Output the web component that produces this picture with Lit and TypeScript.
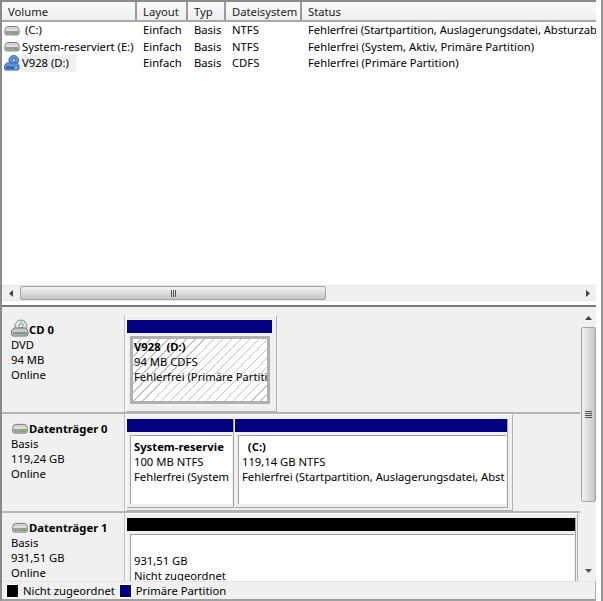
import { LitElement, html, css, svg } from "lit";
import { customElement } from "lit/decorators.js";

const driveIcon = (w = 16) => html`<svg class="ico" width=${w} height="11" viewBox="0 0 18 12">
  <path d="M4 1.5 H14 Q15.5 1.5 16.5 4 L17 6 V9 Q17 11 15 11 H3 Q1 11 1 9 V6 L1.5 4 Q2.5 1.5 4 1.5 Z" fill="#cfd1cf" stroke="#6f7270"/>
  <path d="M2 5.5 H16" stroke="#f4f4f4"/>
  <rect x="2" y="6.5" width="14" height="3.5" fill="#9a9e9c"/>
  <rect x="12" y="7" width="3" height="2.5" fill="#46c43c"/>
</svg>`;

const dvdIcon = svg`
  <circle cx="10" cy="7" r="6" fill="#dfe6e4" stroke="#8d9392"/>
  <circle cx="10" cy="7" r="2" fill="#fff" stroke="#7f8a88"/>
  <path d="M10 1 V5 M14 3 L11.5 6" stroke="#8fb88f"/>`;

const cdIcon = html`<svg class="ico cd" width="18" height="18" viewBox="0 0 18 18">
  ${dvdIcon}
  <path d="M3 9 H15 L17 12 V15 Q17 17 15 17 H2 Q0.5 17 0.5 15 V12 Z" fill="#c9cbc9" stroke="#6f7270"/>
  <rect x="2" y="13" width="14" height="2.5" fill="#8d918f"/>
  <rect x="11" y="13.3" width="3" height="2" fill="#46c43c"/>
</svg>`;

const blueCd = html`<svg class="ico" width="16" height="16" viewBox="0 0 18 18">
  <circle cx="11" cy="6" r="5.5" fill="#5f93d6" stroke="#2f62ad"/>
  <circle cx="11" cy="6" r="1.8" fill="#d8e8fa" stroke="#2f62ad"/>
  <path d="M3 9 H15 L17 12 V15 Q17 17 15 17 H2 Q0.5 17 0.5 15 V12 Z" fill="#5f93d6" stroke="#2f62ad"/>
  <rect x="2" y="13" width="14" height="2.5" fill="#2f62ad"/>
  <rect x="12" y="13.3" width="3" height="2" fill="#9fd0ff"/>
</svg>`;

const COLS = [
  { label: "Volume", w: 135 },
  { label: "Layout", w: 51 },
  { label: "Typ", w: 38 },
  { label: "Dateisystem", w: 76 },
  { label: "Status", w: 294 },
];

const ROWS = [
  { icon: driveIcon(), name: "\u00a0(C:)", cells: ["Einfach", "Basis", "NTFS", "Fehlerfrei (Startpartition, Auslagerungsdatei, Absturzab"] },
  { icon: driveIcon(), name: "System-reserviert (E:)", cells: ["Einfach", "Basis", "NTFS", "Fehlerfrei (System, Aktiv, Primäre Partition)"] },
  { icon: blueCd, name: "V928 (D:)", sel: true, cells: ["Einfach", "Basis", "CDFS", "Fehlerfrei (Primäre Partition)"] },
];

@customElement("app-root")
export class AppRoot extends LitElement {
  static styles = css`
    :host {
      display: block;
      width: 603px;
      height: 601px;
      box-sizing: border-box;
      background: #fff;
      font: 11.25px/15px "Noto Sans", sans-serif;
      color: #000;
      overflow: hidden;
      border-right: 2px solid #8f8f8f;
    }
    .wrap { width: 596px; box-sizing: border-box; border-left: 2px solid #8a8a8a; border-top: 2px solid #8a8a8a; border-bottom: 2px solid #a0a0a0; display: flex; flex-direction: column; height: 100%; }
    .list { height: 303px; flex: none; display: flex; flex-direction: column; background: #fff; }
    .head { display: flex; height: 20px; box-sizing: border-box; flex: none; background: linear-gradient(#fbfbfb, #eceeef); border-bottom: 2px solid #a8a8a8; }
    .th { box-sizing: border-box; padding-left: 6px; border-right: 2px solid #9a9a9a; line-height: 20px; color: #222; flex: none; }
    .th:last-child { border-right: none; }
    .body { flex: 1; }
    .tr { display: flex; height: 16.5px; line-height: 16.5px; white-space: nowrap; }
    .td { box-sizing: border-box; padding-left: 6px; flex: none; overflow: hidden; }
    .tr:first-child .td:last-child { letter-spacing: -0.07px; }
    .td.first { padding-left: 2px; display: flex; align-items: center; }
    .nm { display: inline-block; padding: 0 7px 0 2px; }
    .sel .nm { background: #f0f0f0; }
    .ico { flex: none; display: block; }
    .hs { height: 16px; box-sizing: border-box; flex: none; background: #f0f0f0; display: flex; align-items: center; border-top: 1px solid #e6e6e6; border-bottom: 1px solid #e6e6e6; }
    .arrow { width: 18px; flex: none; display: flex; justify-content: center; }
    .hthumb { width: 306px; height: 14px; box-sizing: border-box; border: 1px solid #a4a4a4; border-radius: 2px; background: linear-gradient(#f2f2f2, #dcdcdc 50%, #c4c4c4); display: flex; align-items: center; justify-content: center; }
    .grip { display: flex; gap: 1px; }
    .grip i { width: 1px; height: 7px; background: #555; display: block; }
    .gap { height: 4px; flex: none; background: #fff; }
    .split { height: 2px; flex: none; background: #7a7a7a; }
    .lower { flex: 1; min-height: 0; display: flex; background: #f0f0f0; overflow: hidden; }
    .disks { flex: 1; min-width: 0; padding-top: 8px; overflow: hidden; }
    .disk { display: flex; height: 97px; }
    .disk.sep { border-top: 2px solid #b4b4b4; box-sizing: content-box; }
    .info { width: 123px; flex: none; box-sizing: border-box; padding: 7px 0 0 9px; border-right: 1px solid #c4c4c4; white-space: nowrap; }
    .ttl { display: flex; font-weight: 700; align-items: center; height: 15px; }
    .ttl .cd { margin-top: -4px; }
    .map { flex: none; box-sizing: border-box; margin-left: 1px; padding: 4px 4px 0 0; background: #f0f0f0; border: 1px solid; border-color: #fff #b0b0b0 #b0b0b0 #fff; display: flex; gap: 1px; height: 97px; }
    .part { display: flex; flex-direction: column; flex: none; overflow: hidden; box-sizing: border-box; border-right: 1px solid #a4a4a4; border-bottom: 1px solid #a4a4a4; }
    .part.plain { border: none; }
    .band { height: 13px; flex: none; margin-bottom: 2px; background: #000080; }
    .band.black { background: #000; }
    .pbody { flex: 1; box-sizing: border-box; margin: 1px 1px 3px 3px; border-top: 1px solid #a0a0a0; border-left: 1px solid #a0a0a0; background: #fff; padding: 3px 0 0 3px; white-space: nowrap; overflow: hidden; }
    .pbody.hatch { border: 3px solid #b0b0b0; padding: 0 0 0 1px; background: repeating-linear-gradient(135deg, #fff 0 5.4px, #c4c4c4 5.4px 6.4px); margin: 1px 2px 3px 3px; }
    .pbody b { display: block; height: 15px; }
    .vs { width: 16px; flex: none; display: flex; flex-direction: column; align-items: center; }
    .up { height: 20px; flex: none; display: flex; align-items: center; justify-content: center; padding-top: 2px; box-sizing: border-box; }
    .vthumb { width: 15px; height: 175px; box-sizing: border-box; border: 1px solid #a4a4a4; border-radius: 2px; background: linear-gradient(90deg, #f2f2f2, #dcdcdc 50%, #c4c4c4); display: flex; align-items: center; justify-content: center; flex: none; }
    .vgrip { display: flex; flex-direction: column; gap: 1px; }
    .vgrip i { width: 7px; height: 1px; background: #555; display: block; }
    .down { margin-top: auto; margin-bottom: 2px; height: 16px; display: flex; align-items: center; justify-content: center; }
    .legend { height: 18px; flex: none; background: #f0f0f0; display: flex; align-items: center; padding-left: 4px; border-top: 1px solid #e4e4e4; border-right: 1px solid #b0b0b0; box-sizing: border-box; }
    .sw { width: 11px; height: 12px; border: 1px solid #fff; flex: none; margin-right: 4px; }
    .sw.k { background: #000; }
    .sw.n { background: #000080; }
    .lg { margin-right: 4px; white-space: nowrap; }
    .tri { display: block; }
  `;

  private part(width: number, height: number, band: string, lines: unknown[], hatch = false) {
    return html`<div class="part ${hatch ? "plain" : ""}" style="width:${width}px;height:${height}px">
      <div class="band ${band}"></div>
      <div class="pbody ${hatch ? "hatch" : ""}">${lines}</div>
    </div>`;
  }

  render() {
    return html`<div class="wrap">
      <div class="list">
        <div class="head">
          ${COLS.map((c) => html`<div class="th" style="width:${c.w}px">${c.label}</div>`)}
        </div>
        <div class="body">
          ${ROWS.map((r) => html`<div class="tr ${r.sel ? "sel" : ""}">
            <div class="td first" style="width:${COLS[0].w}px">${r.icon}<span class="nm">${r.name}</span></div>
            ${r.cells.map((t, i) => html`<div class="td" style="width:${COLS[i + 1].w}px">${t}</div>`)}
          </div>`)}
        </div>
        <div class="hs">
          <div class="arrow"><svg class="tri" width="5" height="7"><path d="M4 0 V7 L0 3.5 Z" fill="#444"/></svg></div>
          <div class="hthumb"><span class="grip"><i></i><i></i><i></i></span></div>
          <div style="flex:1"></div>
          <div class="arrow"><svg class="tri" width="5" height="7"><path d="M1 0 V7 L5 3.5 Z" fill="#444"/></svg></div>
        </div>
        <div class="gap"></div>
      </div>
      <div class="split"></div>
      <div class="lower">
        <div class="disks">
          <div class="disk">
            <div class="info">
              <div class="ttl">${cdIcon}<span>CD 0</span></div>
              <div>DVD</div><div>94 MB</div><div>Online</div>
            </div>
            <div class="map" style="width:151px">
              ${this.part(145, 87, "", [html`<b>V928&nbsp; (D:)</b>`, html`<div>94 MB CDFS</div>`, html`<div>Fehlerfrei (Primäre Partiti</div>`], true)}
            </div>
          </div>
          <div class="disk sep">
            <div class="info">
              <div class="ttl">${driveIcon(18)}<span>Datenträger 0</span></div>
              <div>Basis</div><div>119,24 GB</div><div>Online</div>
            </div>
            <div class="map" style="width:387px">
              ${this.part(107, 89, "", [html`<b>System-reservie</b>`, html`<div>100 MB NTFS</div>`, html`<div>Fehlerfrei (System</div>`])}
              ${this.part(273, 89, "", [html`<b>&nbsp; (C:)</b>`, html`<div>119,14 GB NTFS</div>`, html`<div>Fehlerfrei (Startpartition, Auslagerungsdatei, Abst</div>`])}
            </div>
          </div>
          <div class="disk sep">
            <div class="info">
              <div class="ttl">${driveIcon(18)}<span>Datenträger 1</span></div>
              <div>Basis</div><div>931,51 GB</div><div>Online</div>
            </div>
            <div class="map" style="width:452px">
              ${this.part(449, 89, "black", [html`<b></b>`, html`<div>931,51 GB</div>`, html`<div>Nicht zugeordnet</div>`])}
            </div>
          </div>
        </div>
        <div class="vs">
          <div class="up"><svg class="tri" width="7" height="4"><path d="M0 4 H7 L3.5 0 Z" fill="#444"/></svg></div>
          <div class="vthumb"><span class="vgrip"><i></i><i></i><i></i><i></i></span></div>
          <div class="down"><svg class="tri" width="7" height="4"><path d="M0 0 H7 L3.5 4 Z" fill="#555"/></svg></div>
        </div>
      </div>
      <div class="legend">
        <span class="sw k"></span><span class="lg">Nicht zugeordnet</span>
        <span class="sw n"></span><span class="lg">Primäre Partition</span>
      </div>
    </div>`;
  }
}
